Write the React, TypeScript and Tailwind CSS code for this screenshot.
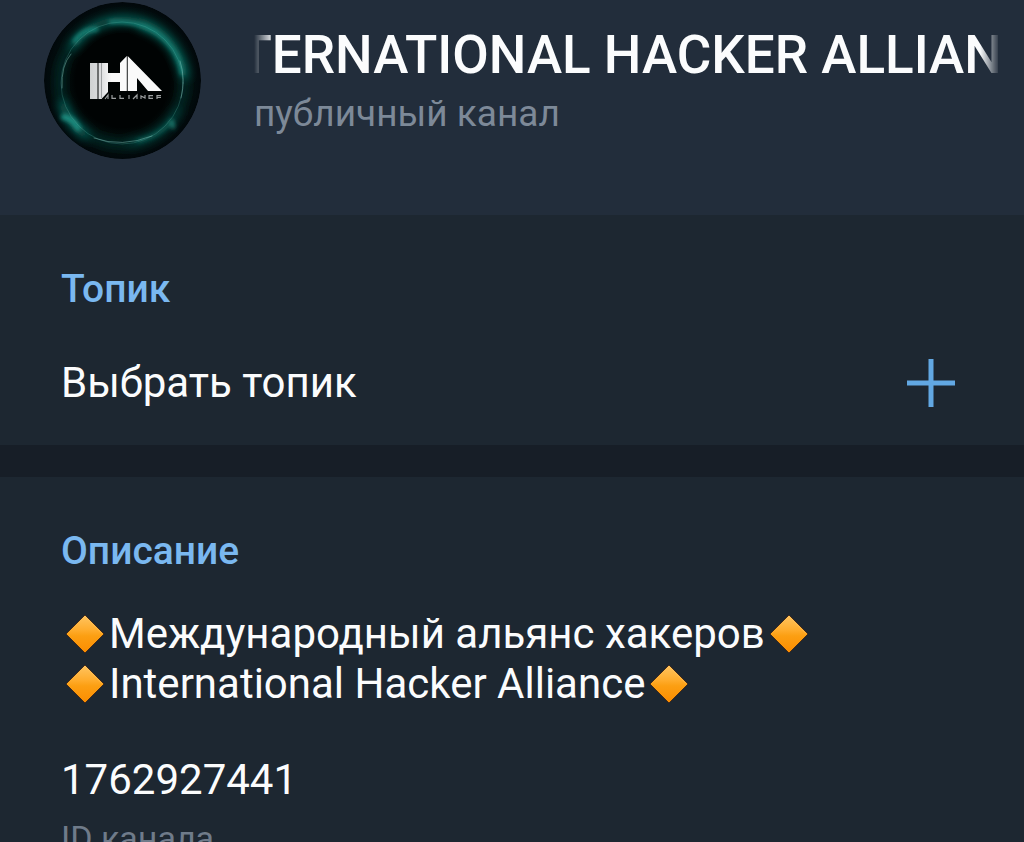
import React from "react";

function Avatar() {
  return (
    <svg viewBox="0 0 157 157" className="mt-[2px] h-[157px] w-[157px] shrink-0 rounded-full" role="img" aria-label="IHA Alliance">
      <defs>
        <filter id="soft" x="-30%" y="-30%" width="160%" height="160%">
          <feGaussianBlur stdDeviation="5" />
        </filter>
        <filter id="fine" x="-30%" y="-30%" width="160%" height="160%">
          <feGaussianBlur stdDeviation="2" />
        </filter>
        <radialGradient id="core">
          <stop offset="0.6" stopColor="#000303" />
          <stop offset="0.8" stopColor="#021413" />
          <stop offset="1" stopColor="#01070a" />
        </radialGradient>
        <linearGradient id="metal" gradientUnits="userSpaceOnUse" x1="46" y1="0" x2="118" y2="0">
          <stop offset="0" stopColor="#cfd1d2" />
          <stop offset="0.15" stopColor="#dcdddf" />
          <stop offset="0.3" stopColor="#fafafa" />
        </linearGradient>
      </defs>
      <circle cx="78.5" cy="78.5" r="78.5" fill="url(#core)" />
      <g fill="none" strokeLinecap="round">
        <g filter="url(#soft)">
          <circle cx="78" cy="80" r="62" stroke="#032a28" strokeWidth="7" />
          <path d="M30 43A60 60 0 0 1 137 62" stroke="#085e56" strokeWidth="8" />
          <path d="M98 24A62 62 0 0 1 141 72" stroke="#0c7468" strokeWidth="7" />
          <path d="M19 104A62 62 0 0 0 40 132" stroke="#09685f" strokeWidth="8" />
          <path d="M88 141A62 62 0 0 0 133 110" stroke="#05443f" strokeWidth="7" />
        </g>
        <g filter="url(#fine)">
          <path d="M31 39Q38 28 52 27" stroke="#178377" strokeWidth="5" />
          <path d="M66 20Q104 18 124 41Q136 54 138 72" stroke="#1a9386" strokeWidth="3" />
          <path d="M20 115Q28 116 34 126" stroke="#1f8f82" strokeWidth="6" />
          <path d="M94 139Q117 133 127 119" stroke="#126b60" strokeWidth="3" />
          <path d="M128 119 129 125" stroke="#1f7c6f" strokeWidth="4" />
        </g>
        <circle cx="78" cy="81" r="61" stroke="#5fbdb0" strokeOpacity="0.25" strokeWidth="1" />
        <path d="M50 136Q78 146 108 134M18 86Q17 63 27 52M137 96Q142 77 136 59" stroke="#9bddd1" strokeOpacity="0.4" strokeWidth="1" />
      </g>
      <g fill="url(#metal)">
        <path d="M46 61H53.500V97H46Z" />
        <path d="M54.500 61H64V71H76V61L82.800 54V89H76V80H64V90L57.500 97H54.500Z" />
        <path d="M83.700 54 118 89H104L93 76V89H83.700Z" />
      </g>
      <path d="M57.500 61V96" stroke="#5c6063" strokeWidth="0.5" />
      <path
        d="M61 97 64 93V97M68 93V96.300H72M76 93V96.300H80M85 93V97M89 97 93 93V97M97 97V94L101 96V93M109 93.700H105V96.300H109M117 93.700H113V97M113 95.500H117"
        fill="none"
        stroke="#b9bcbd"
        strokeOpacity="0.85"
        strokeWidth="1.2"
      />
    </svg>
  );
}

function Diamond() {
  return (
    <svg viewBox="0 0 48 40" className="h-10 w-12 shrink-0" aria-hidden="true">
      <defs>
        <linearGradient id="gem" x1="0" y1="0" x2="0" y2="1">
          <stop offset="0" stopColor="#ffc562" />
          <stop offset="0.4" stopColor="#ffac2c" />
          <stop offset="0.55" stopColor="#fc9f12" />
          <stop offset="1" stopColor="#fb8c00" />
        </linearGradient>
      </defs>
      <path d="M24 1 43 20 24 39 5 20Z" fill="url(#gem)" stroke="#432b1b" strokeWidth="1" strokeLinejoin="round" />
      <path d="M24 2.500 41 19.500" stroke="#ffc45c" strokeOpacity="0.6" />
    </svg>
  );
}

export default function App() {
  return (
    <main className="min-h-screen bg-[#1d2731] font-['Roboto',sans-serif] text-[#fbfcfd]">
      <header className="flex gap-[53px] bg-[#222d3b] pb-14 pl-11">
        <Avatar />
        <div className="min-w-0 flex-1 pt-[25px]">
          <div className="mr-6 flex justify-center overflow-hidden [mask-image:linear-gradient(to_right,transparent,black_20px,black_calc(100%-20px),transparent)]">
            <h1 className="text-[53px] leading-[60px] font-medium whitespace-nowrap">INTERNATIONAL HACKER ALLIANCE</h1>
          </div>
          <p className="mt-2 text-[37px] leading-[42px] text-[#7d8998]">публичный канал</p>
        </div>
      </header>
      <section className="px-[61px] pt-[52px] pb-9">
        <h2 className="text-[39px] leading-[44px] font-medium text-[#7ab8f0]">Топик</h2>
        <button className="mt-[46px] flex w-full items-center justify-between pr-2 text-[42px] leading-[52px]">
          <span>Выбрать топик</span>
          <svg viewBox="0 0 48 48" className="h-12 w-12" aria-hidden="true">
            <path d="M24 0V48M0 24H48" stroke="#62a8e3" strokeWidth="5" />
          </svg>
        </button>
      </section>
      <div className="h-8 bg-[#171e27]" />
      <section className="px-[61px] pt-[52px]">
        <h2 className="text-[39px] leading-[44px] font-medium text-[#7ab8f0]">Описание</h2>
        <div className="mt-9 text-[42px] leading-[50px]">
          <p className="flex items-center"><Diamond />Международный альянс хакеров<Diamond /></p>
          <p className="flex items-center"><Diamond />International Hacker Alliance<Diamond /></p>
        </div>
        <p className="mt-[46px] text-[42px] leading-[50px]">1762927441</p>
        <p className="mt-3 text-[34px] leading-[42px] text-[#6f7b8a]">ID канала</p>
      </section>
    </main>
  );
}
